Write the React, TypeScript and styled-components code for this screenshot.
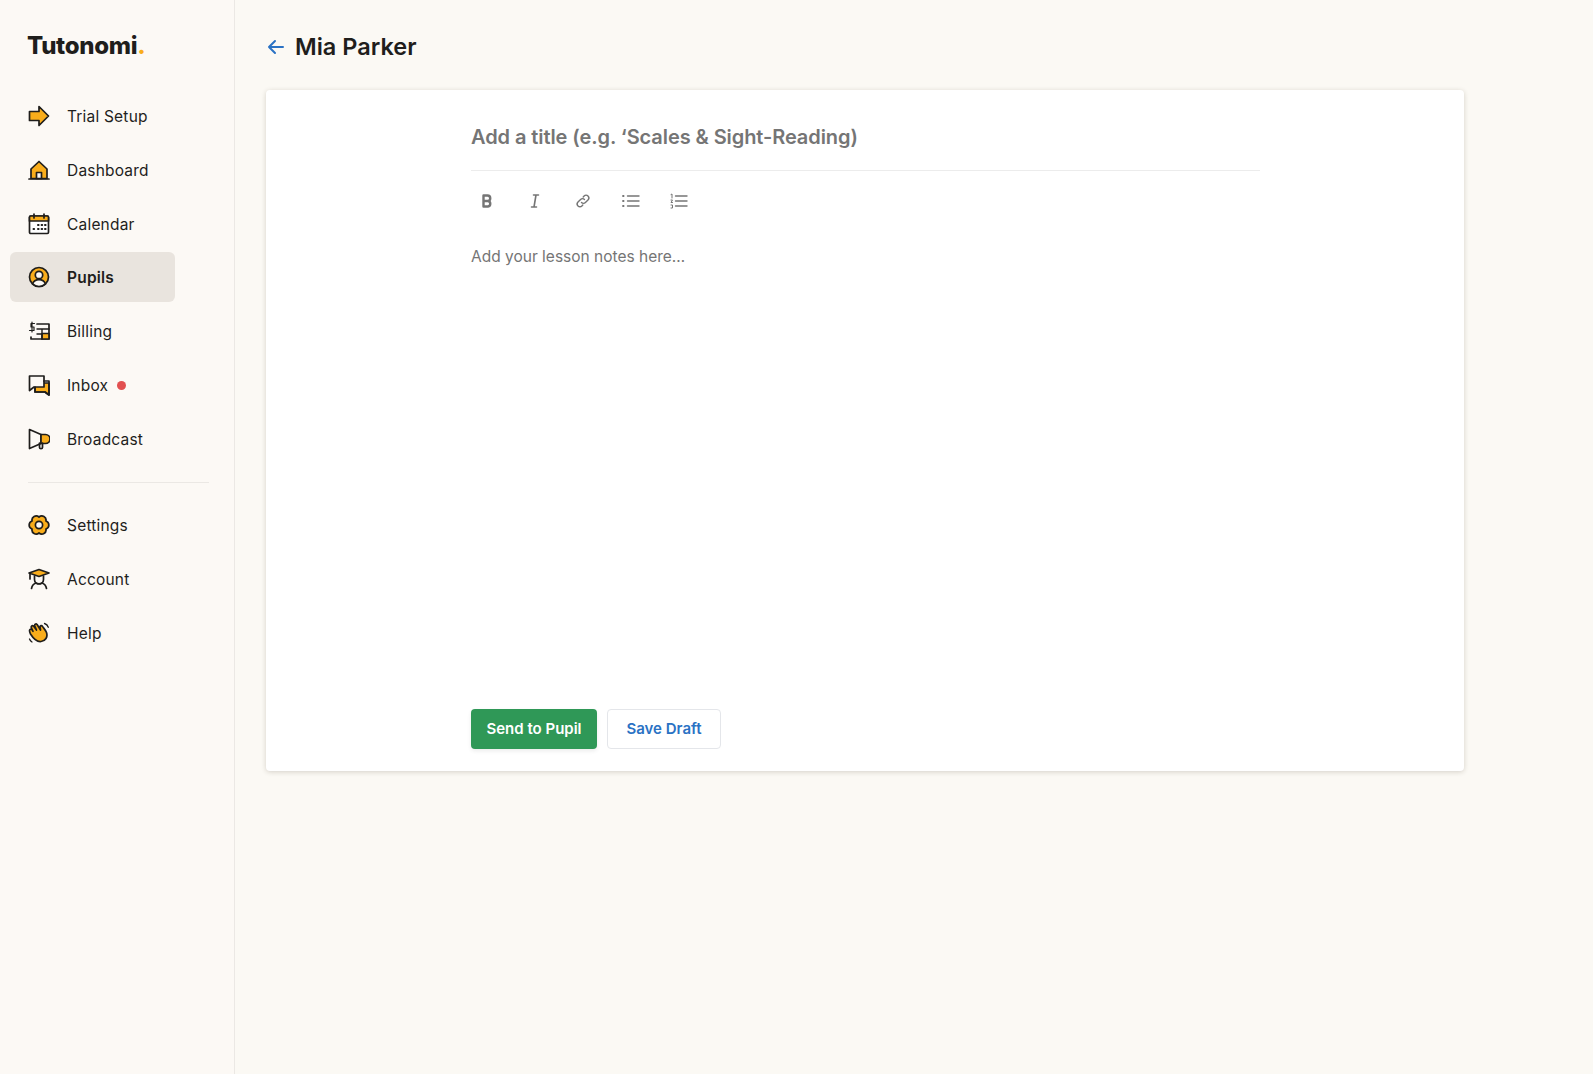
import React from 'react';
import styled, { createGlobalStyle } from 'styled-components';

const GlobalStyle = createGlobalStyle`
  html, body {
    margin: 0;
    padding: 0;
    background: #fbf9f4;
  }

  * {
    box-sizing: border-box;
  }
`;

const INK = '#1f1e1c';
const AMBER = '#f9ad1b';
const PAPER = '#fcf9f5';

const Page = styled.div`
  display: flex;
  min-height: 1074px;
  font-family: Inter, 'Noto Sans', sans-serif;
  color: ${INK};
  background: #fbf9f4;
`;

const Sidebar = styled.aside`
  width: 235px;
  flex-shrink: 0;
  padding: 32px 26px 0 10px;
  background: ${PAPER};
  border-right: 1px solid #ebe8e4;
`;

const Logo = styled.div`
  padding-left: 17px;
  height: 28px;
  line-height: 28px;
  font-size: 24px;
  font-weight: 800;
  letter-spacing: -0.3px;
  color: ${INK};

  span {
    color: ${AMBER};
  }
`;

const Nav = styled.nav<{ $top?: number }>`
  display: flex;
  flex-direction: column;
  gap: 4px;
  margin-top: ${({ $top }) => $top ?? 0}px;
`;

const NavItem = styled.a<{ $active?: boolean }>`
  display: flex;
  align-items: center;
  width: 165px;
  height: 50px;
  margin-top: ${({ $active }) => ($active ? '-1px' : '0')};
  padding-left: 18px;
  border-radius: 6px;
  background: ${({ $active }) => ($active ? '#e9e4de' : 'transparent')};
  font-size: 15.5px;
  letter-spacing: 0.2px;
  font-weight: ${({ $active }) => ($active ? 600 : 400)};
  color: ${INK};

  svg {
    flex-shrink: 0;
    margin-right: 17px;
  }
`;

const Dot = styled.span`
  width: 9px;
  height: 9px;
  margin-left: 9px;
  border-radius: 50%;
  background: #e25050;
`;

const Divider = styled.hr`
  width: 181px;
  height: 1px;
  margin: 18px 0 17px 18px;
  border: 0;
  background: #ebe8e4;
`;

const Main = styled.main`
  flex: 1;
  padding: 32px 0 0 31px;
`;

const Header = styled.header`
  display: flex;
  align-items: center;
  height: 30px;
  gap: 10px;
  margin-bottom: 28px;

  svg {
    margin-left: 1px;
  }
`;

const Title = styled.h1`
  margin: 0;
  font-size: 23.5px;
  line-height: 30px;
  font-weight: 600;
  color: ${INK};
`;

const Card = styled.section`
  display: flex;
  flex-direction: column;
  width: 1198px;
  height: 681px;
  padding: 0 204px 22px 205px;
  background: #fff;
  border-radius: 4px;
  box-shadow: 0 1px 5px rgba(60, 50, 30, 0.2);
`;

const TitleInput = styled.div`
  height: 81px;
  padding-top: 33px;
  line-height: 28px;
  font-size: 20px;
  font-weight: 600;
  letter-spacing: -0.08px;
  color: #757575;
  border-bottom: 1px solid #ececec;
`;

const Toolbar = styled.div`
  display: flex;
  align-items: center;
  height: 40px;
  margin-top: 10px;
`;

const ToolButton = styled.span`
  display: flex;
  align-items: center;
  justify-content: center;
  width: 48px;
  height: 36px;
  margin-left: -8px;
  margin-right: 8px;
`;

const Body = styled.div`
  flex: 1;
  padding-top: 24px;
  font-size: 15.5px;
  line-height: 24px;
  color: #757575;
`;

const Actions = styled.div`
  display: flex;
  gap: 10px;
`;

const SendButton = styled.button`
  width: 126px;
  height: 40px;
  padding: 0 0 2px;
  border: 0;
  border-radius: 4px;
  background: #2f9857;
  color: #fff;
  font: 600 15px Inter, sans-serif;
  box-shadow: 0 2px 4px rgba(0, 0, 0, 0.08);
`;

const DraftButton = styled.button`
  width: 114px;
  height: 40px;
  padding: 0 0 2px;
  border: 1px solid #e4e6ea;
  border-radius: 4px;
  background: #fff;
  color: #2a72c4;
  font: 600 15px Inter, sans-serif;
`;

const Icon = ({ children }: { children: React.ReactNode }) => (
  <svg width="22" height="22" viewBox="0 0 22 22" fill="none" stroke={INK} strokeWidth="1.7" strokeLinejoin="round" strokeLinecap="round">
    {children}
  </svg>
);

const icons: Record<string, React.ReactNode> = {
  trial: <path d="M1.5 6.5H11V1.5L20.5 11 11 20.5V15.5H1.5z" fill={AMBER} />,
  dashboard: (
    <>
      <path d="M3 19.5V10L11 2.5l8 7.5v9.5z" fill={AMBER} />
      <path d="M8.5 19.5v-6h5v6z" fill={PAPER} />
      <path d="M1 20h20" />
    </>
  ),
  calendar: (
    <>
      <rect x="1.5" y="3" width="19" height="17.5" rx="1.2" fill="#fff" />
      <path d="M1.5 8V4.2C1.5 3.5 2 3 2.7 3h16.6c.7 0 1.2.5 1.2 1.2V8z" fill={AMBER} />
      <path d="M6 1v4M16 1v4" />
      <path d="M10 12h.6M13.600 12h.6M17 12h.6M5.500 16h.6M10 16h.6M13.600 16h.6M17 16h.6" strokeWidth="2" />
    </>
  ),
  pupils: (
    <>
      <circle cx="11" cy="11" r="9.5" fill={AMBER} />
      <circle cx="11" cy="9" r="3.7" fill={PAPER} />
      <path d="M4.6 18c1-3 3.5-4.3 6.4-4.3s5.4 1.3 6.4 4.3A9.5 9.5 0 0 1 4.6 18z" fill={PAPER} />
    </>
  ),
  billing: (
    <>
      <path d="M9 4h12v15H3v-2" />
      <path d="M14 13.5h7V19h-7z" fill={AMBER} />
      <path d="M9 9h12M9 14h5M14 9v10" strokeWidth="1.4" />
      <path d="M6.5 3.5H3V7h3v3.5H1.5M4 2v10" strokeWidth="1.2" />
    </>
  ),
  inbox: (
    <>
      <path d="M7 9h14v12l-4-3H7z" fill={AMBER} />
      <path d="M1.5 2H16v11H6l-4.500 3.500z" fill={PAPER} />
      <path d="M16 7h5v14l-4-3H7v-5" />
    </>
  ),
  broadcast: (
    <>
      <path d="M1.5 1.500 13 6.500v9L1.500 20.500z" fill={PAPER} />
      <path d="M13 6.500h4.500a4.500 4.500 0 0 1 0 9H13z" fill={AMBER} />
      <path d="M11.500 15v4.500c0 1.500 3 1.500 3 0V15" />
    </>
  ),
  settings: (
    <>
      <path d="M11 3A4.200 4.200 0 0 1 17.930 7 4.200 4.200 0 0 1 17.930 15 4.200 4.200 0 0 1 11 19 4.200 4.200 0 0 1 4.070 15 4.200 4.200 0 0 1 4.070 7 4.200 4.200 0 0 1 11 3z" fill={AMBER} />
      <circle cx="11" cy="11" r="3.600" fill={PAPER} />
    </>
  ),
  account: (
    <>
      <path d="M1 5 11 1.500 21 5l-10 3.500z" fill={AMBER} />
      <path d="M2 5.500V11M6.500 8v3.500a4.500 4.500 0 0 0 9 0V8" />
      <path d="M3.500 20.500c.5-3 3-5 4.500-5.500 2 1 4 1 6 0 1.500.5 4 2.500 4.500 5.500" />
    </>
  ),
  help: (
    <>
      <path d="M2.500 12c-1-2-1.500-3.500-.5-4.500s2 .2 3 1.800L3.500 6c-.8-1.500.5-3 2-2l3 4L6.800 4c-.5-1.500 1-2.800 2.300-1.500l3.400 5.500-.5-3c0-1.500 1.800-1.800 2.500-.5 1.500 2 3 3.500 4 6 1.500 4.500-1 8.500-5.500 9-4.500.5-8-3.500-10.500-7.500z" fill={AMBER} />
      <path d="M16.500 1.500c1.800.5 3.200 1.900 3.800 3.800M1.500 17c.5 1.200 1.200 2.200 2.500 3" strokeWidth="1.300" />
    </>
  ),
};

const Tool = ({ children }: { children: React.ReactNode }) => (
  <svg width="20" height="20" viewBox="0 0 20 20" fill="none" stroke="#757575" strokeWidth="1.4" strokeLinecap="round" strokeLinejoin="round">
    {children}
  </svg>
);

type Item = { key: string; label: string; active?: boolean; dot?: boolean };

const primaryItems: Item[] = [
  { key: 'trial', label: 'Trial Setup' },
  { key: 'dashboard', label: 'Dashboard' },
  { key: 'calendar', label: 'Calendar' },
  { key: 'pupils', label: 'Pupils', active: true },
  { key: 'billing', label: 'Billing' },
  { key: 'inbox', label: 'Inbox', dot: true },
  { key: 'broadcast', label: 'Broadcast' },
];

const secondaryItems: Item[] = [
  { key: 'settings', label: 'Settings' },
  { key: 'account', label: 'Account' },
  { key: 'help', label: 'Help' },
];

const renderItem = ({ key, label, active, dot }: Item) => (
  <NavItem key={key} $active={active}>
    <Icon>{icons[key]}</Icon>
    {label}
    {dot && <Dot />}
  </NavItem>
);

const App = () => (
  <Page>
    <GlobalStyle />
    <Sidebar>
      <Logo>
        Tutonomi<span>.</span>
      </Logo>
      <Nav $top={31}>{primaryItems.map(renderItem)}</Nav>
      <Divider />
      <Nav>{secondaryItems.map(renderItem)}</Nav>
    </Sidebar>
    <Main>
      <Header>
        <svg width="18" height="18" viewBox="0 0 18 18" fill="none" stroke="#2a72c4" strokeWidth="2" strokeLinecap="round" strokeLinejoin="round">
          <path d="M16 9H2M8 3 2 9l6 6" />
        </svg>
        <Title>Mia Parker</Title>
      </Header>
      <Card>
        <TitleInput>Add a title (e.g. ‘Scales &amp; Sight-Reading)</TitleInput>
        <Toolbar>
          <ToolButton>
            <Tool>
              <path d="M6.5 4.5h4a2.700 2.700 0 0 1 0 5.500h-4zM6.500 10H11a2.800 2.800 0 0 1 0 5.500H6.500z" strokeWidth="2.400" />
            </Tool>
          </ToolButton>
          <ToolButton>
            <Tool>
              <path d="M8.500 4h5M6.500 16h5M11 4 9 16" strokeWidth="1.600" />
            </Tool>
          </ToolButton>
          <ToolButton>
            <Tool>
              <path d="M8.500 11.500a2.700 2.700 0 0 0 3.900 0l2.600-2.600a2.700 2.700 0 0 0-3.900-3.900l-.9.900M11.500 8.500a2.700 2.700 0 0 0-3.900 0L5 11.100A2.700 2.700 0 0 0 8.900 15l.9-.9" />
            </Tool>
          </ToolButton>
          <ToolButton>
            <Tool>
              <path d="M6.500 5H18M6.500 10H18M6.500 15H18" />
              <path d="M2 5h.6M2 10h.6M2 15h.6" strokeWidth="1.800" />
            </Tool>
          </ToolButton>
          <ToolButton>
            <Tool>
              <path d="M6.500 5H18M6.500 10H18M6.500 15H18" />
              <path d="M2 3.500 3 3v4M2 9h1.500L2 11.500h1.500M2 14h1.500v3H2" strokeWidth="1" />
            </Tool>
          </ToolButton>
        </Toolbar>
        <Body>Add your lesson notes here…</Body>
        <Actions>
          <SendButton>Send to Pupil</SendButton>
          <DraftButton>Save Draft</DraftButton>
        </Actions>
      </Card>
    </Main>
  </Page>
);

export default App;
